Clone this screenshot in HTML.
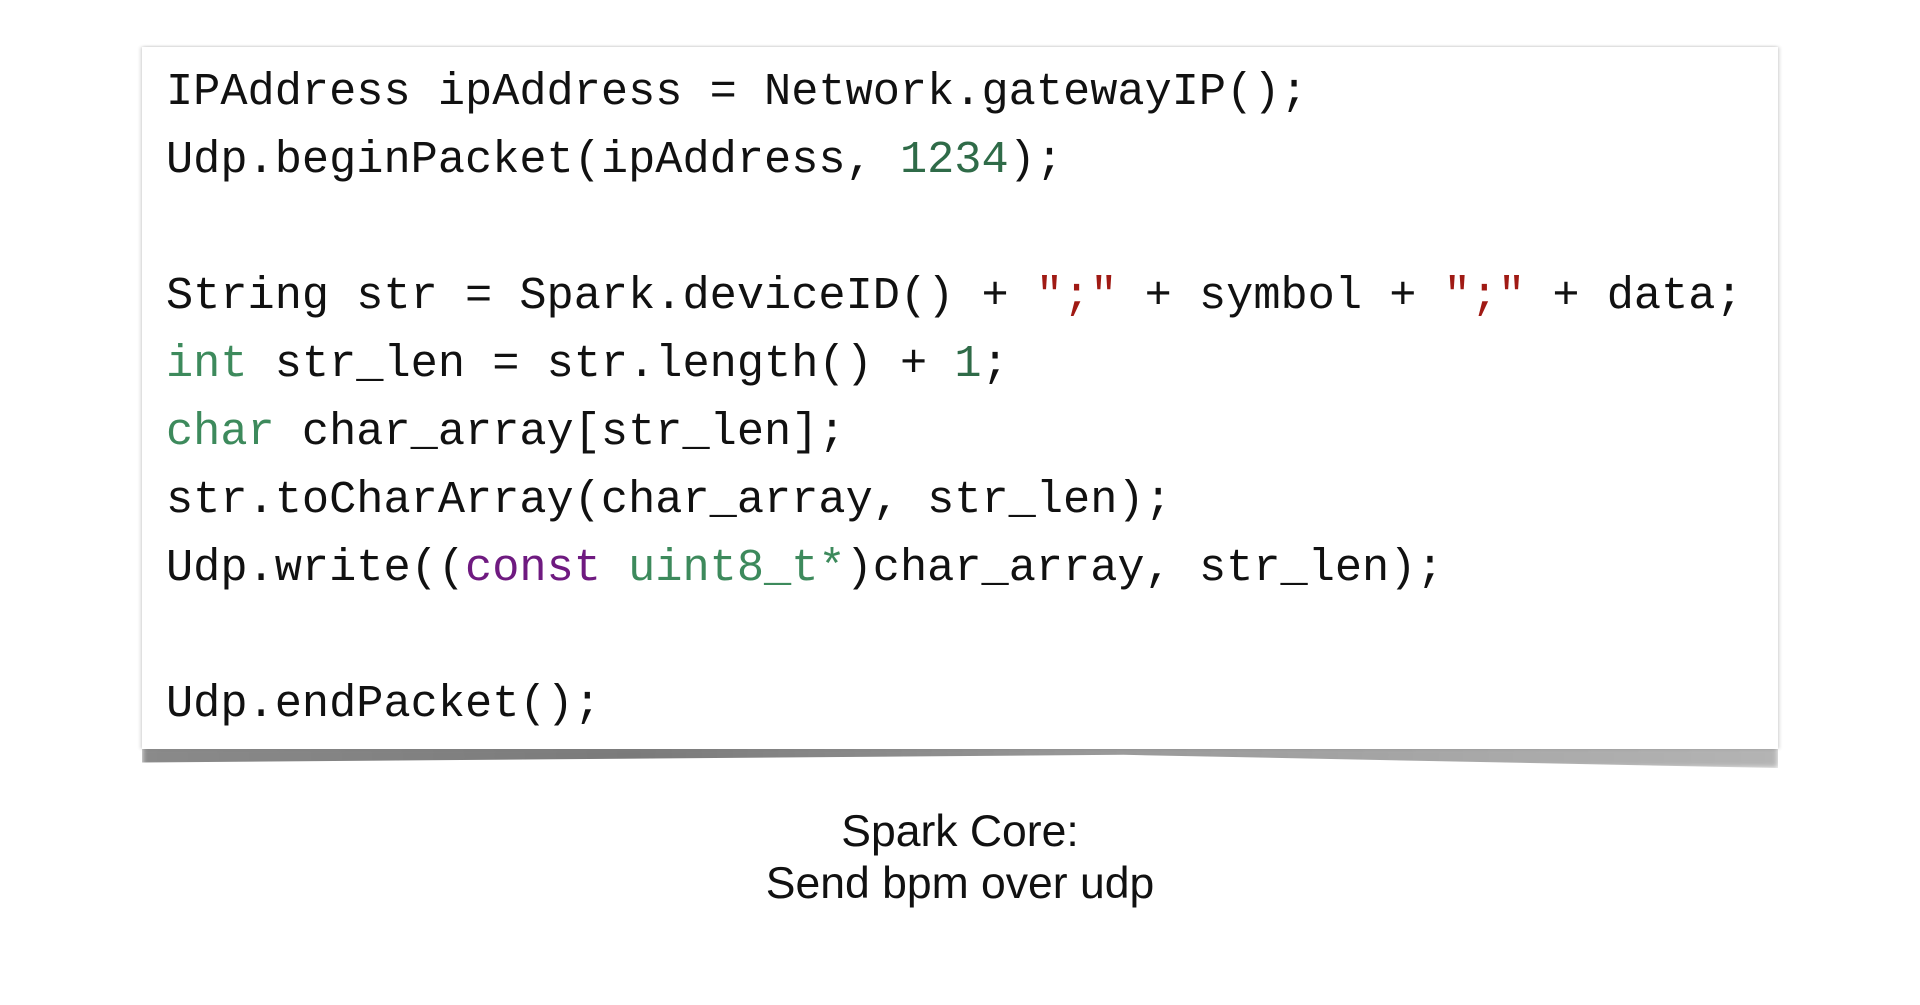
<!DOCTYPE html>
<html><head><meta charset="utf-8"><style>
html,body{margin:0;padding:0;background:#fff;width:1920px;height:1005px;overflow:hidden;position:relative}
.box{position:absolute;left:142px;top:47px;width:1636px;height:702px;background:#fff;box-shadow:-2px 0 3px rgba(0,0,0,0.12),2px 0 3px rgba(0,0,0,0.12),0 -1px 2px rgba(0,0,0,0.05);z-index:2}
.sh{position:absolute;left:142px;top:746px;width:1636px;height:22px;z-index:1;
background:linear-gradient(to right,#8a8a8a 0%,#7a7a7a 30%,#9a9a9a 60%,#b4b4b4 100%);
clip-path:polygon(0 0,100% 0,100% 100%,60% 40%,0 75%);filter:blur(3px)}
.l{position:absolute;left:166px;font-family:"Liberation Mono",monospace;font-size:45.3px;line-height:68px;color:#111;white-space:pre;z-index:3}
.n{color:#2f6b48}.k{color:#3d8a5c}.s{color:#a01a14}.p{color:#6f1a80}
.cap{position:absolute;left:0;width:1920px;text-align:center;font-family:"Liberation Sans",sans-serif;font-size:44.5px;line-height:52px;color:#111}
</style></head><body>
<div class="box"></div><div class="sh"></div>
<div class="l" style="top:58px">IPAddress ipAddress = Network.gatewayIP();</div>
<div class="l" style="top:126px">Udp.beginPacket(ipAddress, <span class="n">1234</span>);</div>
<div class="l" style="top:262px">String str = Spark.deviceID() + <span class="s">";"</span> + symbol + <span class="s">";"</span> + data;</div>
<div class="l" style="top:330px"><span class="k">int</span> str_len = str.length() + <span class="n">1</span>;</div>
<div class="l" style="top:398px"><span class="k">char</span> char_array[str_len];</div>
<div class="l" style="top:466px">str.toCharArray(char_array, str_len);</div>
<div class="l" style="top:534px">Udp.write((<span class="p">const</span> <span class="k">uint8_t*</span>)char_array, str_len);</div>
<div class="l" style="top:670px">Udp.endPacket();</div>
<div class="cap" style="top:806px">Spark Core:<br>Send bpm over udp</div>
</body></html>
